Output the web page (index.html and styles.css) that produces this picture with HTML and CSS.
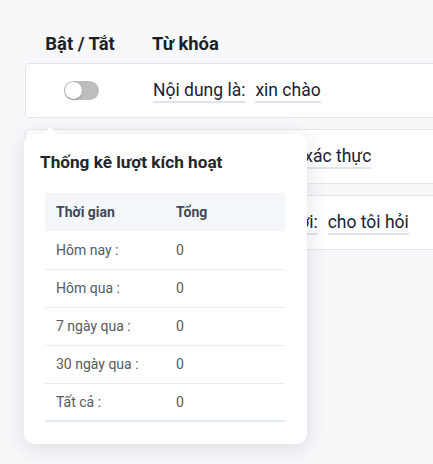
FILE: index.html
```html
<!DOCTYPE html>
<html lang="vi">
<head>
<meta charset="utf-8">
<title>Từ khóa</title>
<link rel="stylesheet" href="styles.css">
</head>
<body>
<div class="page">
  <div class="head">
    <div class="col-toggle">Bật / Tắt</div>
    <div class="col-kw">Từ khóa</div>
  </div>
  <div class="list">
    <div class="card">
      <div class="col-toggle"><span class="switch"><span class="knob"></span></span></div>
      <div class="col-kw"><span class="tag">Nội dung là:</span><span class="tag">xin chào</span></div>
    </div>
    <div class="card">
      <div class="col-toggle"><span class="switch"><span class="knob"></span></span></div>
      <div class="col-kw"><span class="tag">Nội dung có chứa:</span><span class="tag">xác thực</span></div>
    </div>
    <div class="card">
      <div class="col-toggle"><span class="switch"><span class="knob"></span></span></div>
      <div class="col-kw"><span class="tag">Nội dung bắt đầu với:</span><span class="tag">cho tôi hỏi</span></div>
    </div>
  </div>
  <div class="popover">
    <div class="pop-title">Thống kê lượt kích hoạt</div>
    <table class="stats">
      <thead>
        <tr><th class="c1">Thời gian</th><th>Tổng</th></tr>
      </thead>
      <tbody>
        <tr><td class="c1">Hôm nay :</td><td>0</td></tr>
        <tr><td class="c1">Hôm qua :</td><td>0</td></tr>
        <tr><td class="c1">7 ngày qua :</td><td>0</td></tr>
        <tr><td class="c1">30 ngày qua :</td><td>0</td></tr>
        <tr class="last"><td class="c1">Tất cả :</td><td>0</td></tr>
      </tbody>
    </table>
  </div>
</div>
</body>
</html>
```

FILE: styles.css
```css
* { box-sizing: border-box; }
html, body { margin: 0; padding: 0; }
body {
  background: #f7f8fa;
  font-family: Roboto, "Noto Sans", "Liberation Sans", sans-serif;
  color: #1f2330;
  width: 433px;
  height: 464px;
  overflow: hidden;
}
.page {
  position: relative;
  padding: 29px 0 0 25px;
  width: 480px;
}
.head {
  display: flex;
  align-items: center;
  padding: 0 0 0 20px;
  height: 28px;
  font-weight: 700;
  font-size: 18.4px;
  color: #1c1f26;
}
.col-toggle {
  width: 70px;
  display: flex;
  justify-content: center;
  flex: none;
}
.col-kw {
  margin-left: 37px;
  display: flex;
  gap: 10px;
  white-space: nowrap;
}
.list {
  margin-top: 6px;
  display: flex;
  flex-direction: column;
  gap: 11px;
}
.card {
  display: flex;
  align-items: center;
  height: 55px;
  padding-left: 20px;
  background: #fff;
  border: 1px solid #e2e7ef;
  border-radius: 4px;
}
.switch {
  position: relative;
  width: 35px;
  height: 19px;
  border-radius: 10px;
  background: #bdbdbd;
  display: block;
}
.knob {
  position: absolute;
  left: 1px;
  top: 1px;
  width: 17px;
  height: 17px;
  border-radius: 50%;
  background: #fff;
  box-shadow: 0 1px 2px rgba(0,0,0,0.25);
}
.tag {
  font-size: 17.5px;
  line-height: 22px;
  color: #1d2130;
  border-bottom: 2px solid #dfe4ee;
}
.popover {
  position: absolute;
  left: 24px;
  top: 134px;
  width: 283px;
  height: 310px;
  background: #fff;
  border-radius: 10px;
  box-shadow: 0 4px 22px rgba(30, 40, 60, 0.13);
  padding: 16px 22px 0 16px;
}
.popover::before {
  content: "";
  position: absolute;
  left: 19px;
  top: -7px;
  width: 0;
  height: 0;
  border-left: 7px solid transparent;
  border-right: 7px solid transparent;
  border-bottom: 7px solid #fff;
}
.pop-title {
  font-size: 17.2px;
  font-weight: 700;
  line-height: 24px;
  color: #23262d;
}
.stats {
  margin: 19px 0 0 5px;
  width: 240px;
  border-collapse: collapse;
  font-size: 14px;
}
.stats th {
  background: #f4f7fa;
  height: 38px;
  text-align: left;
  font-weight: 700;
  color: #3f4a5a;
  padding: 0 0 0 11px;
}
.stats td {
  height: 38px;
  color: #555a61;
  padding: 0 0 0 11px;
  border-bottom: 1px solid #e8edf3;
}
.stats .c1 { width: 120px; }
.stats tr.last td { border-bottom: 2px solid #e3e9f0; }
```
